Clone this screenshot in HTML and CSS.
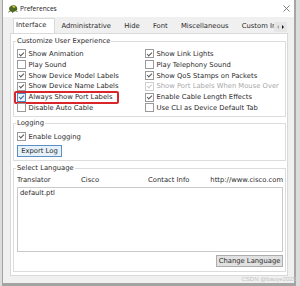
FILE: index.html
```html
<!DOCTYPE html>
<html lang="en">
<head>
  <meta charset="UTF-8" />
  <title>Preferences</title>
  <link rel="stylesheet" href="styles.css">
</head>
<body>
  <div class="window">
    <div class="titlebar">
      <svg class="app-icon" width="10" height="9" viewBox="0 0 10 9">
        <path d="M1 5C1 2.5 3.5 1 6 1.3C8.4 1.7 9.6 3.6 9.2 5.6C8.6 7.8 4.5 8.6 2.3 7.6Z" fill="#4d6b22"/>
        <path d="M4.2 2.4C5.4 1.8 7 2 7.6 3.2C6.6 3.9 5 3.9 4.2 2.4Z" fill="#d9c640"/>
        <path d="M2 6.6L0.6 8.4M4.8 7.8L4.6 9M8 6.6L9.4 8" stroke="#3b5514" stroke-width="0.9"/>
      </svg>
      <span class="title">Preferences</span>
      <svg class="close" width="7" height="7" viewBox="0 0 7 7">
        <path d="M0.5 0.5L6.5 6.5M6.5 0.5L0.5 6.5" stroke="#666" stroke-width="0.8"/>
      </svg>
    </div>

    <div class="tabbar">
      <div class="tabs">
        <div class="tab active">Interface</div>
        <div class="tab">Administrative</div>
        <div class="tab">Hide</div>
        <div class="tab">Font</div>
        <div class="tab">Miscellaneous</div>
        <div class="tab">Custom Interface</div>
      </div>
      <svg class="tab-scroll" width="13" height="10" viewBox="0 0 13 10">
        <rect width="13" height="10" fill="#e6e6e6"/>
        <path d="M5 3L3 5L5 7Z" fill="#a8a8a8"/>
        <path d="M8 3L10 5L8 7Z" fill="#111"/>
      </svg>
    </div>

    <div class="panel">
      <fieldset class="group group-ux">
        <legend>Customize User Experience</legend>
        <div class="options">
          <div class="opt"><span class="cb checked"></span>Show Animation</div>
          <div class="opt"><span class="cb checked"></span>Show Link Lights</div>
          <div class="opt"><span class="cb"></span>Play Sound</div>
          <div class="opt"><span class="cb"></span>Play Telephony Sound</div>
          <div class="opt"><span class="cb checked"></span>Show Device Model Labels</div>
          <div class="opt"><span class="cb checked"></span>Show QoS Stamps on Packets</div>
          <div class="opt"><span class="cb checked"></span>Show Device Name Labels</div>
          <div class="opt disabled"><span class="cb checked"></span>Show Port Labels When Mouse Over</div>
          <div class="opt highlight"><span class="cb checked hover"></span>Always Show Port Labels</div>
          <div class="opt"><span class="cb checked"></span>Enable Cable Length Effects</div>
          <div class="opt"><span class="cb"></span>Disable Auto Cable</div>
          <div class="opt"><span class="cb"></span>Use CLI as Device Default Tab</div>
        </div>
      </fieldset>

      <fieldset class="group group-log">
        <legend>Logging</legend>
        <div class="opt"><span class="cb checked"></span>Enable Logging</div>
        <button class="btn btn-focus">Export Log</button>
      </fieldset>

      <fieldset class="group group-lang">
        <legend>Select Language</legend>
        <div class="lang-head">
          <span>Translator</span>
          <span>Cisco</span>
          <span>Contact Info</span>
          <span>http://www.cisco.com</span>
        </div>
        <div class="lang-list">
          <div class="lang-item">default.ptl</div>
        </div>
        <div class="lang-actions">
          <button class="btn">Change Language</button>
        </div>
      </fieldset>
    </div>

    <div class="watermark">CSDN @baoye2025</div>
  </div>
</body>
</html>
```

FILE: styles.css
```css
body {
  margin: 0;
  width: 300px;
  height: 286px;
  background-color: #dcdcdc;
  font-family: "DejaVu Sans", Verdana, sans-serif;
  font-size: 6.8px;
  color: #2a2a2a;
  overflow: hidden;
}

.window {
  position: relative;
  box-sizing: border-box;
  margin-left: 2px;
  width: 294px;
  height: 286px;
  background-color: #f0f0f0;
  border-left: 1px solid #a3a3a3;
  border-right: 2px solid #a6a6a6;
  border-bottom: 3px solid #a4a4a4;
}

.titlebar {
  display: flex;
  align-items: center;
  height: 17px;
  padding-left: 5px;
  background-color: #fff;
}

.app-icon {
  margin-right: 2px;
}

.title {
  flex: 1;
  font-family: "Open Sans", "Noto Sans", sans-serif;
  font-size: 6.6px;
  color: #222;
}

.close {
  margin-right: 4px;
}

.tabbar {
  display: flex;
  align-items: flex-end;
  height: 16px;
  padding-left: 9.7px;
  padding-right: 7px;
}

.tabs {
  display: flex;
  align-items: flex-end;
  flex: 1;
  min-width: 0;
  overflow: hidden;
  white-space: nowrap;
}

.tab {
  flex: none;
  height: 13px;
  line-height: 13px;
  padding: 0 6.6px;
}

.tab.active {
  position: relative;
  z-index: 1;
  height: 14px;
  padding: 0 7.5px 1px 2.3px;
  margin-bottom: -1px;
  background-color: #fff;
  border: 1px solid #d9d9d9;
  border-bottom: none;
}

.tab-scroll {
  flex: none;
  margin-bottom: 1.3px;
}

.panel {
  box-sizing: border-box;
  margin-left: 7px;
  width: 278px;
  padding: 3px 1px 3px 2px;
  background-color: #fff;
  border: 1px solid #d9d9d9;
}

.group {
  margin: 0;
  min-width: 0;
  border: 1px solid #dcdcdc;
  padding: 0 2px 0 3px;
}

.group legend {
  padding: 0 1px;
  margin-left: -1px;
  line-height: 9px;
}

.group-ux {
  padding-top: 2.6px;
  padding-bottom: 2.6px;
}

.group-log {
  margin-top: 2.5px;
  padding-top: 2.8px;
  padding-bottom: 2.9px;
}

.group-lang {
  margin-top: 3.5px;
  padding-top: 3px;
  padding-bottom: 4px;
}

.options {
  display: grid;
  grid-template-columns: 128px 1fr;
  grid-auto-rows: 10.8px;
}

.opt {
  position: relative;
  display: flex;
  align-items: center;
  gap: 2.5px;
  height: 10.8px;
  white-space: nowrap;
}

.cb {
  position: relative;
  box-sizing: border-box;
  width: 9px;
  height: 9px;
  flex: none;
  background-color: #fff;
  border: 1px solid #9a9a9a;
}

.cb.checked::after {
  content: "";
  position: absolute;
  left: 1.4px;
  top: 1.2px;
  width: 4.4px;
  height: 2.2px;
  border-left: 1px solid #555;
  border-bottom: 1px solid #555;
  transform: rotate(-45deg);
}

.cb.hover {
  border-color: #4a86c5;
  background-color: #eef5fc;
}

.cb.hover::after {
  border-color: #2b5f98;
}

.opt.disabled {
  color: #a9a9a9;
}

.opt.disabled .cb {
  border-color: #cfcfcf;
}

.opt.disabled .cb::after {
  border-color: #c8c8c8;
}

.highlight::after {
  content: "";
  position: absolute;
  left: -3px;
  top: -1.2px;
  width: 105px;
  height: 13.3px;
  box-sizing: border-box;
  border: 2px solid #d8262b;
  border-radius: 2px;
}

.btn {
  box-sizing: border-box;
  height: 12px;
  margin: 3px 0 0;
  padding: 0 3.2px;
  font-family: inherit;
  font-size: 6.8px;
  line-height: 10px;
  color: #2a2a2a;
  background-color: #e1e1e1;
  border: 1px solid #adadad;
  border-radius: 0;
}

.btn-focus {
  background-color: #e5f1fb;
  border-color: #5b8fc4;
}

.lang-head {
  display: grid;
  grid-template-columns: 64px 67px 1fr auto;
  line-height: 9px;
  white-space: nowrap;
}

.lang-list {
  box-sizing: border-box;
  height: 65px;
  margin-top: 1.5px;
  padding: 1px 2px;
  border: 1px solid #c9c9c9;
  background-color: #fff;
}

.lang-item {
  line-height: 9px;
}

.lang-actions {
  display: flex;
  justify-content: flex-end;
}

.lang-actions .btn {
  padding: 0 1.6px;
}

.watermark {
  position: absolute;
  right: -2px;
  bottom: 1px;
  font-family: "Liberation Sans", Arial, sans-serif;
  font-size: 6px;
  color: #c4c4c4;
  white-space: nowrap;
}
```
